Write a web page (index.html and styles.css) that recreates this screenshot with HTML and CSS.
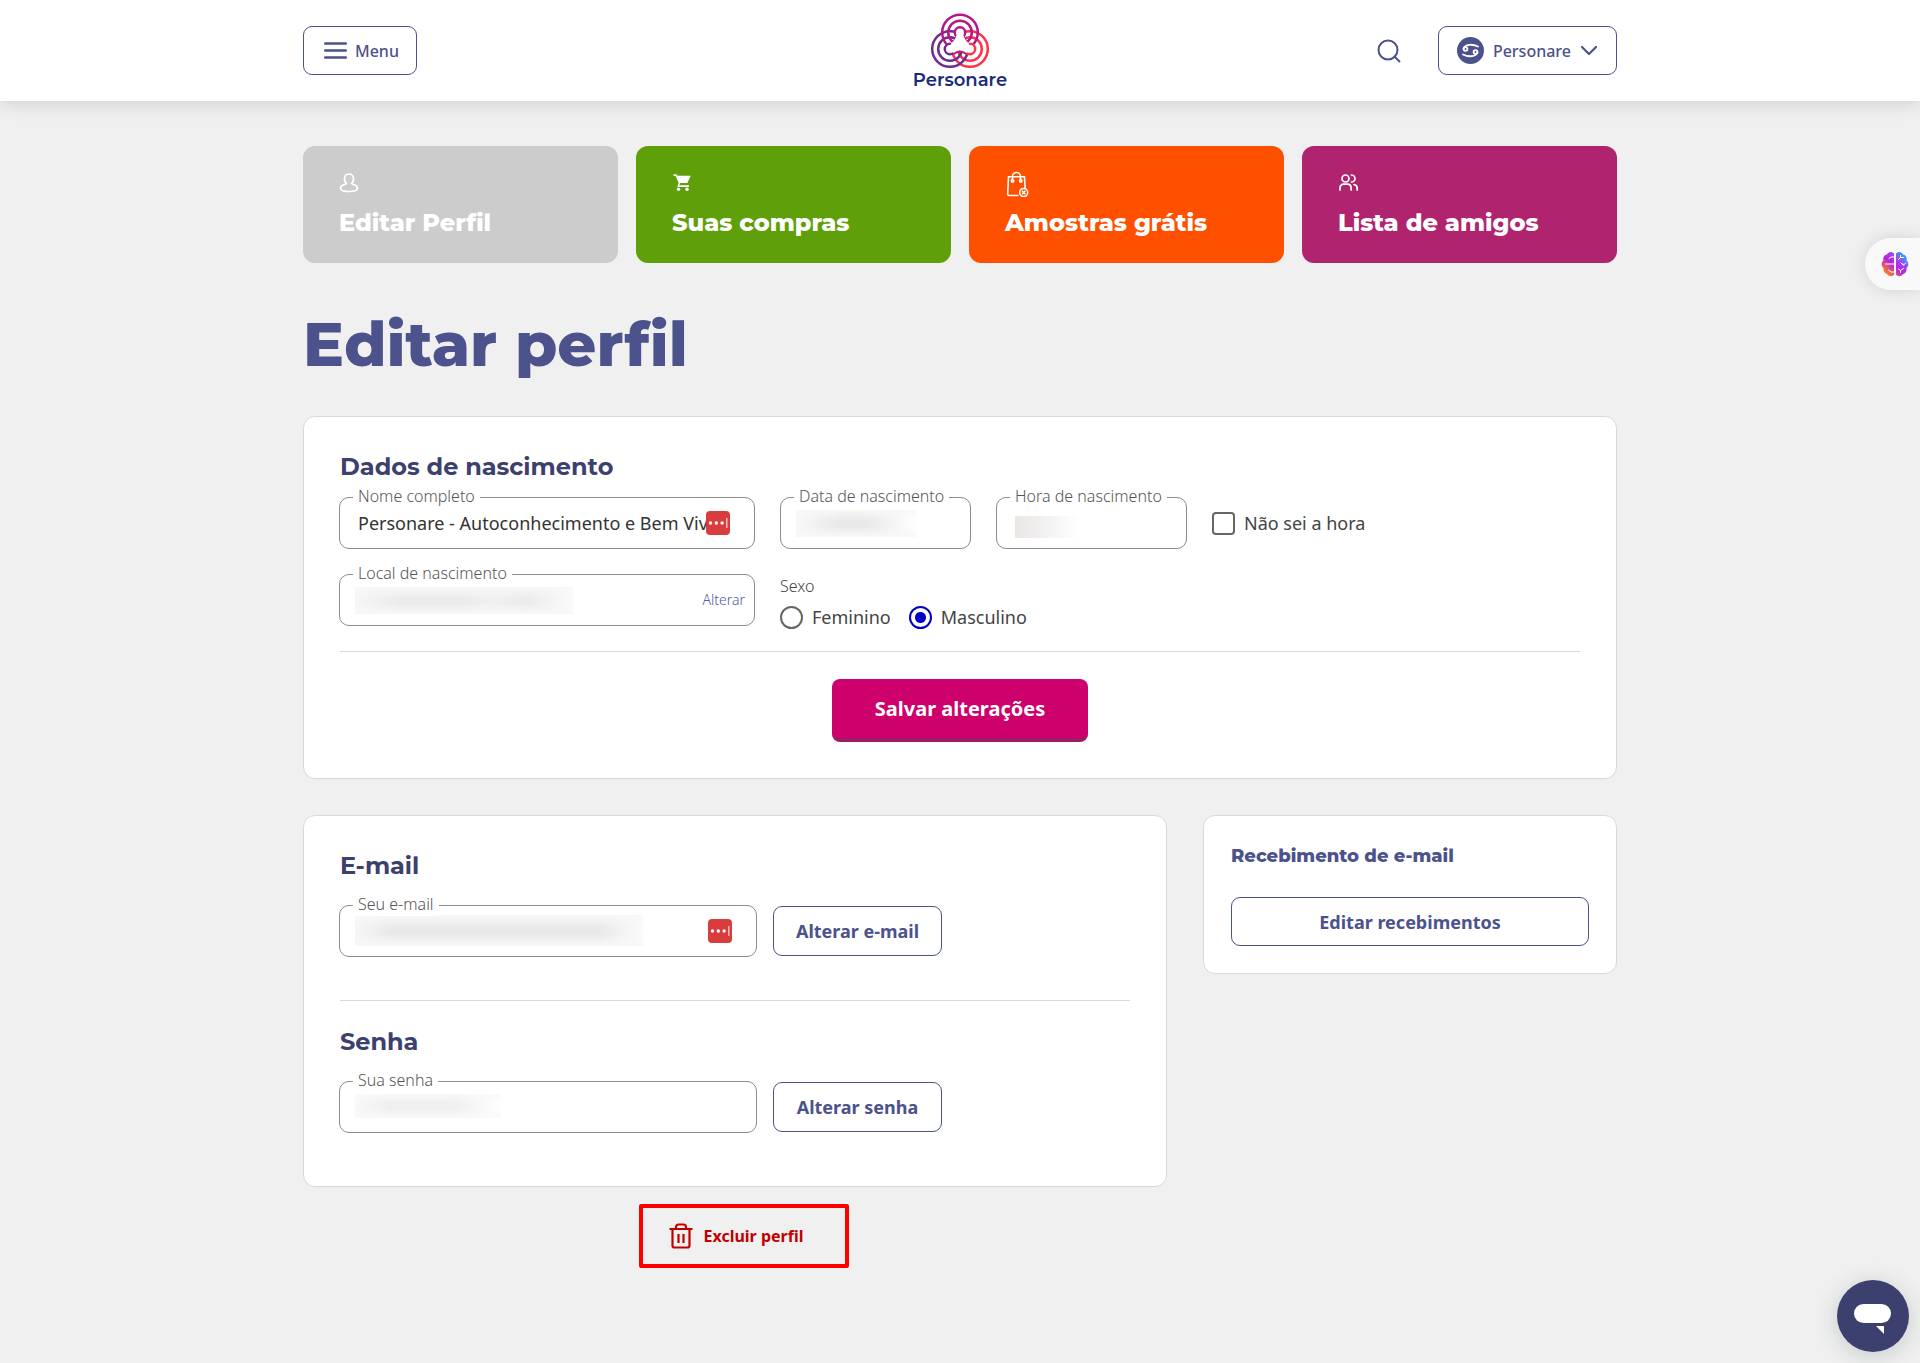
FILE: index.html
```html
<!DOCTYPE html>
<html lang="pt-BR">
<head>
<meta charset="utf-8">
<meta name="viewport" content="width=device-width, initial-scale=1">
<title>Editar perfil - Personare</title>
<link rel="stylesheet" href="styles.css">
</head>
<body>
<header class="topbar">
  <div class="container topbar-inner">
    <div class="topbar-start">
      <button class="outline-btn nav-btn" type="button">
        <svg width="23" height="17" viewBox="0 0 23 17" fill="none" stroke="currentColor" stroke-width="2.400" stroke-linecap="round"><path d="M1.200 1.500h20.600M1.200 8.500h20.600M1.200 15.500h20.600"/></svg>
        Menu
      </button>
    </div>
    <a class="logo" href="#">
      <svg width="60" height="58" viewBox="0 0 60 58" fill="none" stroke-width="2.500">
        <g stroke="#ff3348"><circle cx="40" cy="37" r="17.800"/><circle cx="40" cy="37" r="11.800"/></g>
        <g stroke="#6f2c91"><circle cx="20" cy="37" r="17.800"/><circle cx="20" cy="37" r="11.800"/></g>
        <g stroke="#b5178a"><circle cx="30" cy="20.500" r="17.800"/><circle cx="30" cy="20.500" r="11.800"/></g>
        <circle cx="20" cy="37" r="5.200" fill="#fff" stroke="#6f2c91"/>
        <circle cx="40" cy="37" r="5.200" fill="#fff" stroke="#ff3348"/>
        <circle cx="30" cy="20.500" r="5.200" fill="#fff" stroke="#b5178a"/>
        <path d="M28 20h4c0 5 1.500 8 6 12l2 5-4 3c-2-2-4-2.500-6-2.500S26 38 24 40l-4-3 2-5c4.500-4 6-7 6-12z" fill="#fff" stroke="#fff" stroke-width="2" stroke-linejoin="round"/>
        <path d="M23.500 42Q30 37.500 36.500 42" stroke="#c8206f" stroke-width="2"/>
      </svg>
      <span>Personare</span>
    </a>
    <div class="topbar-end">
      <button class="icon-btn" type="button" aria-label="Buscar">
        <svg width="24" height="24" viewBox="0 0 24 24" fill="none" stroke="currentColor" stroke-width="2"><circle cx="11" cy="11" r="9.500"/><path d="M17 17l6 6"/></svg>
      </button>
      <button class="outline-btn nav-btn user-btn" type="button">
        <svg width="27" height="27" viewBox="0 0 27 27"><circle cx="13.500" cy="13.500" r="13.500" fill="#4b528c"/><g fill="none" stroke="#fff" stroke-width="1.800" stroke-linecap="round"><circle cx="8.500" cy="12" r="1.900"/><circle cx="18.500" cy="15" r="1.900"/><path d="M6.500 11.500C8 7.500 15 6.500 21 9.500M20.500 15.500C19 19.500 12 20.500 6 17.500"/></g></svg>
        Personare
        <svg width="18" height="11" viewBox="0 0 18 11" fill="none" stroke="currentColor" stroke-width="2.200" stroke-linecap="round" stroke-linejoin="round"><path d="M2 2l7 7 7-7"/></svg>
      </button>
    </div>
  </div>
</header>

<main class="container">
  <nav class="tiles">
    <a class="tile tile-gray" href="#">
      <svg width="20" height="28" viewBox="0 0 20 28" fill="none" stroke="currentColor" stroke-width="1.700" stroke-linejoin="round"><path d="M7.500 14.500C4.500 12 4.500 5 10 5s5.500 7 2.500 9.500c.5 1.300 6 1 6 4.500 0 2.500-4 3.500-8.500 3.500S1.500 21.500 1.500 19c0-3.500 5.500-3.200 6-4.500z"/></svg>
      Editar Perfil
    </a>
    <a class="tile tile-green" href="#">
      <svg width="20" height="28" viewBox="0 0 20 28" fill="currentColor"><path d="M1.500 5.300h3l1 1.500h13.300l-3.500 7.200H8.300l-1 2.200H17v1.700H5.200l1.500-4L3.600 7H1.500z"/><circle cx="6.500" cy="20.300" r="1.700"/><circle cx="15" cy="20.300" r="1.700"/></svg>
      Suas compras
    </a>
    <a class="tile tile-orange" href="#">
      <svg width="25" height="28" viewBox="0 0 25 28" fill="none" stroke="currentColor" stroke-width="1.600" stroke-linejoin="round"><path d="M13.500 26.500H4a1.300 1.300 0 0 1-1.300-1.300L3.500 7.800h16l.6 11.500M7.500 11V7.500a4 4 0 0 1 8 0V11"/><circle cx="7.500" cy="12" r="1.200"/><circle cx="15.800" cy="12" r="1.200"/><circle cx="18.700" cy="23.500" r="4"/><path d="M17 21.800l3.400 3.400M20.400 21.800L17 25.200"/></svg>
      Amostras grátis
    </a>
    <a class="tile tile-magenta" href="#">
      <svg width="22" height="28" viewBox="0 0 22 28" fill="none" stroke="currentColor" stroke-width="1.700" stroke-linecap="round"><circle cx="7.500" cy="9.500" r="3.500"/><path d="M2 21v-2c0-2.500 1.700-3.800 3.700-3.800h3.700c2 0 3.700 1.300 3.700 3.800v2M13.500 6a3.500 3.500 0 0 1 0 7M16 15.500c2.500.5 3.200 2.200 3.200 3.700V21"/></svg>
      Lista de amigos
    </a>
  </nav>

  <h1 class="page-title">Editar perfil</h1>

  <form class="card birth-card">
    <h2 class="card-title">Dados de nascimento</h2>
    <div class="birth-grid">
      <div class="field">
        <label for="nome">Nome completo</label>
        <input id="nome" type="text" value="Personare - Autoconhecimento e Bem Viv">
        <svg class="vault" width="24" height="24" viewBox="0 0 24 24"><rect width="24" height="24" rx="4" fill="#d93c3c"/><g fill="#fff"><circle cx="4.500" cy="12" r="1.700"/><circle cx="10.300" cy="12" r="1.700"/><circle cx="16.100" cy="12" r="1.700"/></g><path d="M20.800 7v10" stroke="#f3b9b9" stroke-width="1.500"/></svg>
      </div>
      <div class="field">
        <label for="data">Data de nascimento</label>
        <input id="data" class="masked masked-date" type="text">
      </div>
      <div class="field">
        <label for="hora">Hora de nascimento</label>
        <input id="hora" class="masked masked-time" type="text">
      </div>
      <label class="choice"><input type="checkbox">Não sei a hora</label>
      <div class="field">
        <label for="local">Local de nascimento</label>
        <input id="local" class="masked masked-place" type="text">
        <a class="field-link" href="#">Alterar</a>
      </div>
      <div class="sex" role="radiogroup" aria-labelledby="sexo">
        <span id="sexo" class="sex-title">Sexo</span>
        <div class="sex-options">
          <label class="choice"><input type="radio" name="sexo">Feminino</label>
          <label class="choice"><input type="radio" name="sexo" checked>Masculino</label>
        </div>
      </div>
    </div>
    <hr class="rule">
    <button class="save-btn" type="button">Salvar alterações</button>
  </form>

  <div class="columns">
    <div class="account">
      <form class="card account-card">
        <h2 class="card-title">E-mail</h2>
        <div class="account-row">
          <div class="field">
            <label for="email">Seu e-mail</label>
            <input id="email" class="masked masked-email" type="email">
            <svg class="vault" width="24" height="24" viewBox="0 0 24 24"><rect width="24" height="24" rx="4" fill="#d93c3c"/><g fill="#fff"><circle cx="4.500" cy="12" r="1.700"/><circle cx="10.300" cy="12" r="1.700"/><circle cx="16.100" cy="12" r="1.700"/></g><path d="M20.800 7v10" stroke="#f3b9b9" stroke-width="1.500"/></svg>
          </div>
          <button class="outline-btn action-btn" type="button">Alterar e-mail</button>
        </div>
        <hr class="rule">
        <h2 class="card-title">Senha</h2>
        <div class="account-row">
          <div class="field">
            <label for="senha">Sua senha</label>
            <input id="senha" class="masked masked-password" type="password">
          </div>
          <button class="outline-btn action-btn" type="button">Alterar senha</button>
        </div>
      </form>
      <button class="delete-btn" type="button">
        <svg width="24" height="26" viewBox="0 0 24 26" fill="none" stroke="currentColor" stroke-width="2.200" stroke-linejoin="round"><path d="M.5 6h23M3.500 6v16.500a2 2 0 0 0 2 2h13a2 2 0 0 0 2-2V6M7 5.500V4a2.500 2.500 0 0 1 2.500-2.500h5A2.500 2.500 0 0 1 17 4v1.500M9.500 11v9M14.500 11v9"/></svg>
        Excluir perfil
      </button>
    </div>
    <aside class="card mail-card">
      <h3 class="mail-title">Recebimento de e-mail</h3>
      <button class="outline-btn action-btn" type="button">Editar recebimentos</button>
    </aside>
  </div>
</main>

<button class="assistant-tab" type="button" aria-label="Assistente">
  <svg width="28" height="28" viewBox="0 0 28 28">
    <defs><linearGradient id="brain" x1="0" y1="1" x2="1" y2="0"><stop offset="0" stop-color="#ffa81f"/><stop offset=".2" stop-color="#f0703c"/><stop offset=".45" stop-color="#b721e0"/><stop offset=".62" stop-color="#a63cf0"/><stop offset=".85" stop-color="#2fa0ff"/></linearGradient></defs>
    <path fill="url(#brain)" d="M13 3.500C11.500 1 7 1.500 6 4.500 3 5 1.500 8 2.500 10.500 0 12.500 0 16 2.500 18c-.5 3 1 5.500 3.500 6 1.500 2.500 5.500 3 7 .8zM15 3.500C16.500 1 21 1.500 22 4.500c3 .5 4.500 3.500 3.500 6 2.500 2 2.500 5.500 0 7.500.5 3-1 5.500-3.500 6-1.500 2.500-5.500 3-7 .8z"/>
    <g fill="none" stroke="#fff" stroke-width="1" stroke-linecap="round"><path d="M13 7h-3l-2 1.500M13 14H4.500M13 22h-3L7.500 20M17.500 9.500l2-2v-2M19.500 7.500l3 0M20 13l2.500 2 2.500-2M22 15v-1M17.500 19l2 1.500 3-2M19.500 20.500v2"/></g>
  </svg>
</button>
<button class="chat-btn" type="button" aria-label="Abrir chat">
  <svg width="72" height="72" viewBox="0 0 72 72"><rect x="17" y="24" width="37" height="19" rx="9.500" fill="#fff"/><path d="M39 46h8v8z" fill="#fff"/></svg>
</button>
</body>
</html>
```

FILE: styles.css
```css
* { box-sizing: border-box; }

:root {
  --indigo: #4b528c;
  --indigo-dark: #3c406e;
  --line: #d9d9d9;
  --text: "Noto Sans", "Open Sans", sans-serif;
  --display: "Montserrat", "Inter", sans-serif;
}

body {
  margin: 0;
  min-height: 100vh;
  background: #f0f0f0;
  color: #444;
  font: 18px/24px var(--text);
}

h1, h2, h3 { margin: 0; font-family: var(--display); }
button, input { font: inherit; }
button { cursor: pointer; }
a { text-decoration: none; }
svg { flex: none; display: block; }

.container {
  width: calc(100% - 32px);
  max-width: 1314px;
  margin: 0 auto;
}

/* Header */
.topbar {
  background: #fff;
  box-shadow: 0 0 20px rgba(0, 0, 0, .17);
}
.topbar-inner {
  display: grid;
  grid-template-columns: 1fr auto 1fr;
  align-items: center;
  height: 101px;
}
.topbar-end {
  display: flex;
  justify-content: flex-end;
  align-items: center;
  gap: 37px;
}
.outline-btn {
  display: flex;
  align-items: center;
  justify-content: center;
  height: 49px;
  border: 1px solid var(--indigo);
  border-radius: 9px;
  background: #fff;
  color: var(--indigo);
}
.nav-btn {
  gap: 8px;
  padding: 0 17px 0 20px;
  font-size: 16px;
  font-weight: 500;
}
.user-btn { gap: 9px; padding: 0 18px; }
.icon-btn {
  padding: 0;
  border: 0;
  background: none;
  color: var(--indigo);
}
.logo {
  display: flex;
  flex-direction: column;
  align-items: center;
  color: #1c2a7c;
  font: 600 18px/20px var(--display);
}

/* Shortcut tiles */
.tiles {
  display: grid;
  grid-template-columns: repeat(4, 1fr);
  gap: 18px;
  margin-top: 45px;
}
.tile {
  display: flex;
  flex-direction: column;
  gap: 10px;
  height: 117px;
  padding: 23px 36px;
  border-radius: 12px;
  color: #fff;
  font: 800 24px/32px var(--display);
}
.tile-gray { background: #ccc; }
.tile-green { background: #5f9f0a; }
.tile-orange { background: #ff5000; }
.tile-magenta { background: #b0246f; }

.page-title {
  margin: 45px 0 36px;
  color: var(--indigo);
  font-size: 61px;
  font-weight: 800;
  line-height: 72px;
}

/* Cards */
.card {
  border: 1px solid var(--line);
  border-radius: 12px;
  background: #fff;
  padding: 32px 36px 36px;
}
.card-title {
  color: var(--indigo-dark);
  font-size: 24px;
  font-weight: 700;
  line-height: 36px;
}
.rule {
  width: 100%;
  height: 1px;
  margin: 0;
  border: 0;
  background: var(--line);
}

/* Fields */
.field {
  position: relative;
  display: flex;
  align-items: center;
  min-width: 0;
  height: 52px;
  border: 1px solid #8c8c8c;
  border-radius: 10px;
}
.field label {
  position: absolute;
  top: -14px;
  left: 13px;
  padding: 0 5px;
  background: #fff;
  color: #555;
  font-size: 16px;
  font-weight: 300;
  white-space: nowrap;
}
.field input {
  flex: 1;
  min-width: 0;
  height: 100%;
  padding: 0 0 0 18px;
  border: 0;
  border-radius: 10px;
  background: transparent;
  color: #333;
  outline: 0;
}
.vault { margin-right: 24px; }
.field-link {
  margin-right: 9px;
  color: #5159ab;
  font-size: 14px;
  font-weight: 300;
}

/* Private values are covered by a soft grey smear */
.field .masked {
  background-repeat: no-repeat;
  background-position: 15px 12px;
}
.field .masked-date {
  background-image: linear-gradient(#f8f8f8, transparent 40%, transparent 60%, #f8f8f8), linear-gradient(90deg, #f8f8f8, #e9e9e9 35%, #e9e9e9 60%, #fff);
  background-size: 120px 27px;
}
.field .masked-time {
  background-image: linear-gradient(90deg, #ebe6e4, #f1f1f1 45%, #fff);
  background-size: 64px 22px;
  background-position: 18px 18px;
}
.field .masked-place {
  background-image: linear-gradient(#f8f8f8, transparent 45%, transparent 60%, #f8f8f8), linear-gradient(90deg, #f6f6f6, #ebebeb 20%, #ebebeb 50%, #f0f0f0 62%, #ebebeb 80%, #fbfbfb);
  background-size: 218px 27px;
}
.field .masked-email {
  background-image: linear-gradient(#f8f8f8, transparent 45%, transparent 60%, #f8f8f8), linear-gradient(90deg, #f6f6f6, #e9e9e9 12%, #e9e9e9 85%, #fbfbfb);
  background-size: 288px 31px;
  background-position: 15px 9px;
}
.field .masked-password {
  background-image: linear-gradient(#f9f9f9, transparent 40%, transparent 60%, #f9f9f9), linear-gradient(90deg, #f8f8f8, #efefef 25%, #f0f0f0 70%, #fff);
  background-size: 146px 24px;
}

/* Birth data */
.birth-card { display: flex; flex-direction: column; }
.birth-grid {
  display: grid;
  grid-template-columns: 416fr 191fr 191fr 367fr;
  gap: 25px;
  margin: 12px 1px 25px -1px;
}
.choice {
  display: flex;
  align-items: center;
  gap: 9px;
  white-space: nowrap;
}
.choice input {
  appearance: none;
  width: 23px;
  height: 23px;
  margin: 0;
  border: 2px solid #666;
  border-radius: 4px;
  background: #fff;
}
.choice input[type="radio"] { border-radius: 50%; }
.choice input[type="radio"]:checked {
  border-color: #0000c8;
  background: radial-gradient(circle, #0000c8 5px, #fff 6px);
}
.sex { grid-column: 2 / -1; height: 52px; }
.sex-title {
  display: block;
  font-size: 16px;
  font-weight: 300;
}
.sex-options { display: flex; gap: 18px; margin-top: 7px; }

.save-btn {
  align-self: center;
  width: 256px;
  height: 63px;
  margin-top: 27px;
  border: 0;
  border-bottom: 4px solid #9e1d62;
  border-radius: 8px;
  background: #ce006b;
  color: #fff;
  font-size: 20px;
  font-weight: 700;
}

/* Account area */
.columns {
  display: grid;
  grid-template-columns: 864fr 414fr;
  align-items: start;
  gap: 36px;
  margin-top: 36px;
}
.account { display: flex; flex-direction: column; align-items: center; }
.account-card { width: 100%; padding-bottom: 53px; }
.account-row {
  display: grid;
  grid-template-columns: 418fr 169fr 171fr;
  align-items: center;
  gap: 16px;
  margin: 21px 1px 0 -1px;
}
.account-card .rule { margin: 43px 0 23px; }
.action-btn { width: 100%; font-weight: 700; }
.account-row .action-btn { height: 50px; }

.delete-btn {
  display: flex;
  align-items: center;
  gap: 11px;
  height: 64px;
  margin: 17px 0 0 18px;
  padding: 0 42px 0 26px;
  border: 4px solid #f00;
  border-radius: 2px;
  background: transparent;
  color: #c00000;
  font-size: 16px;
  font-weight: 700;
}

.mail-card { padding: 28px 27px 27px; }
.mail-title {
  margin-bottom: 29px;
  color: var(--indigo);
  font-size: 18px;
  font-weight: 800;
  line-height: 24px;
}

/* Floating helpers */
.assistant-tab {
  position: fixed;
  top: 238px;
  right: 0;
  width: 55px;
  height: 52px;
  padding: 0 0 0 16px;
  border: 0;
  border-radius: 26px 0 0 26px;
  background: #f9f9f9;
  box-shadow: 0 0 16px rgba(0, 0, 0, .12);
}
.chat-btn {
  position: fixed;
  right: 11px;
  bottom: 11px;
  padding: 0;
  border: 0;
  border-radius: 50%;
  background: var(--indigo-dark);
  box-shadow: 0 4px 24px rgba(0, 40, 40, .18);
}
```
